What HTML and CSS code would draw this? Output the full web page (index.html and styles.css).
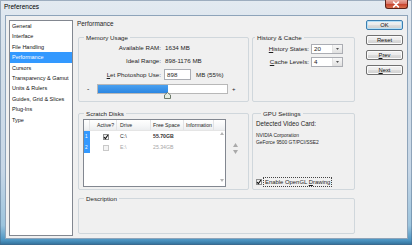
FILE: index.html
```html
<!DOCTYPE html>
<html>
<head>
<meta charset="utf-8">
<title>Preferences</title>
<link rel="stylesheet" href="styles.css">
</head>
<body>
<div class="window">
  <div class="titlebar">
    <span class="title">Preferences</span>
    <div class="close">
      <svg width="23" height="9" viewBox="0 0 23 9"><path d="M9 2 L14 7 M14 2 L9 7" stroke="#fff" stroke-width="1.6" stroke-linecap="round"/></svg>
    </div>
  </div>
  <div class="client">
    <ul class="nav">
      <li>General</li>
      <li>Interface</li>
      <li>File Handling</li>
      <li class="sel">Performance</li>
      <li>Cursors</li>
      <li>Transparency &amp; Gamut</li>
      <li>Units &amp; Rulers</li>
      <li>Guides, Grid &amp; Slices</li>
      <li>Plug-Ins</li>
      <li>Type</li>
    </ul>

    <div class="main">
      <div class="page-title">Performance</div>
      <div class="grid">
        <section class="group memory">
          <div class="legend">Memory Usage</div>
          <div class="mem-grid">
            <span class="lbl">Available RAM:</span><span class="val">1634 MB</span>
            <span class="lbl">Ideal Range:</span><span class="val">898-1176 MB</span>
            <span class="lbl"><u>L</u>et Photoshop Use:</span>
            <span class="val use"><span class="input">898</span><span>MB (55%)</span></span>
          </div>
          <div class="slider">
            <span class="minus">-</span>
            <div class="bar">
              <div class="fill" style="width:70px"></div>
              <svg class="thumb" width="7" height="7" viewBox="0 0 7 7"><path d="M0.5 3 L3.5 0.5 L6.5 3 L6.5 6.5 L0.5 6.5 Z" fill="#e4ece0" stroke="#6d7a6a" stroke-width="1"/></svg>
            </div>
            <span class="plus">+</span>
          </div>
        </section>

        <section class="group history">
          <div class="legend">History &amp; Cache</div>
          <div class="hist-grid">
            <span class="lbl"><u>H</u>istory States:</span>
            <span class="combo"><span class="combo-text">20</span><span class="combo-btn"><svg width="3" height="2" viewBox="0 0 3 2"><path d="M0 0 L3 0 L1.5 2 Z" fill="#555"/></svg></span></span>
            <span class="lbl"><u>C</u>ache Levels:</span>
            <span class="combo"><span class="combo-text">4</span><span class="combo-btn"><svg width="3" height="2" viewBox="0 0 3 2"><path d="M0 0 L3 0 L1.5 2 Z" fill="#555"/></svg></span></span>
          </div>
        </section>

        <section class="group scratch">
          <div class="legend">Scratch Disks</div>
          <div class="scratch-body">
            <div class="table">
              <div class="thead">
                <span class="c-num"></span><span class="c-act">Active?</span><span class="c-drv">Drive</span><span class="c-free">Free Space</span><span class="c-info">Information</span><span class="c-fill"></span>
              </div>
              <div class="tbody">
                <div class="rows">
                  <div class="tr">
                    <span class="c-num num">1</span>
                    <span class="c-act"><span class="chk"><svg width="6" height="6" viewBox="0 0 6 6"><path d="M1 3.1 L2.4 4.6 L5 1" fill="none" stroke="#111" stroke-width="1.1"/></svg></span></span>
                    <span class="c-drv">C:\</span>
                    <span class="c-free strong">55.70GB</span>
                    <span class="c-info"></span>
                  </div>
                  <div class="tr off">
                    <span class="c-num num">2</span>
                    <span class="c-act"><span class="chk dis"></span></span>
                    <span class="c-drv">E:\</span>
                    <span class="c-free">25.34GB</span>
                    <span class="c-info"></span>
                  </div>
                </div>
                <div class="vscroll">
                  <svg width="4" height="3" viewBox="0 0 4 3"><path d="M0 3 L4 3 L2 0 Z" fill="#b5b5b5"/></svg>
                  <svg width="4" height="3" viewBox="0 0 4 3"><path d="M0 0 L4 0 L2 3 Z" fill="#b5b5b5"/></svg>
                </div>
              </div>
            </div>
            <div class="order">
              <svg width="5" height="4" viewBox="0 0 5 4"><path d="M0 4 L5 4 L2.5 0 Z" fill="#a9a9a9"/></svg>
              <svg width="5" height="4" viewBox="0 0 5 4"><path d="M0 0 L5 0 L2.5 4 Z" fill="#a9a9a9"/></svg>
            </div>
          </div>
        </section>

        <section class="group gpu">
          <div class="legend">GPU Settings</div>
          <div class="gpu-label">Detected Video Card:</div>
          <div class="gpu-info">NVIDIA Corporation<br>GeForce 9500 GT/PCI/SSE2</div>
          <label class="gl">
            <span class="chk"><svg width="6" height="6" viewBox="0 0 6 6"><path d="M1 3.1 L2.4 4.6 L5 1" fill="none" stroke="#111" stroke-width="1.1"/></svg></span>
            <span class="gl-text">Enable OpenGL <u>D</u>rawing</span>
          </label>
        </section>

        <section class="group desc">
          <div class="legend">Description</div>
        </section>
      </div>
    </div>

    <div class="buttons">
      <button class="btn default">OK</button>
      <button class="btn">Reset</button>
      <button class="btn"><u>P</u>rev</button>
      <button class="btn"><u>N</u>ext</button>
    </div>
  </div>
</div>
</body>
</html>
```

FILE: styles.css
```css
* { box-sizing: border-box; }

html, body {
  margin: 0;
  padding: 0;
}

body {
  width: 412px;
  height: 245px;
  overflow: hidden;
  font-family: "Liberation Sans", Arial, sans-serif;
  color: #1e1e1e;
  background: #cfdbe7;
}

.window {
  width: 412px;
  height: 245px;
  display: flex;
  flex-direction: column;
  padding: 0 4px 6px 5px;
  background: linear-gradient(180deg, #e3eaf1 0%, #d5e0ea 25%, #c6d6e6 70%, #9cc4dd 92%, #4d95c2 98%, #2f6d96 100%);
  box-shadow: inset 0 0 0 1px rgba(70, 100, 130, 0.45);
}

.titlebar {
  height: 15px;
  display: flex;
  align-items: flex-start;
  flex: none;
}

.title {
  font-size: 6.5px;
  line-height: 8px;
  margin-top: 3px;
  margin-left: -1px;
  color: #000;
}

.close {
  margin-left: auto;
  width: 23px;
  height: 9px;
  border: 1px solid #5b2219;
  border-top: none;
  border-radius: 0 0 3px 3px;
  background: linear-gradient(180deg, #e8aa9f 0%, #d9786a 45%, #c8452f 55%, #d8714f 100%);
  display: flex;
}

.close svg { display: block; margin-left: -1px; }

.client {
  flex: 1;
  display: flex;
  align-items: flex-start;
  background: #f0f0f0;
  border: 1px solid #8ea4ba;
}

/* left category list */
.nav {
  list-style: none;
  margin: 4px 0 0 3px;
  padding: 0;
  width: 64px;
  height: 216px;
  background: #fff;
  border: 1px solid #828790;
  flex: none;
}

.nav li {
  height: 10.4px;
  line-height: 10.4px;
  padding-left: 2px;
  font-size: 5.5px;
  color: #111;
  white-space: nowrap;
}

.nav li.sel {
  background: #3399ff;
  color: #fff;
}

/* main panel */
.main {
  width: 278px;
  margin-left: 4px;
  padding-top: 4px;
  flex: none;
}

.page-title {
  font-size: 6.4px;
  line-height: 8px;
  height: 8px;
  color: #1e1e1e;
}

.grid {
  margin-top: 9px;
  margin-left: 1px;
  display: grid;
  grid-template-columns: 171px 103px;
  column-gap: 3px;
}

.group {
  border: 1px solid #d0d7dc;
  border-radius: 2px;
  font-size: 6.2px;
}

.legend {
  width: fit-content;
  height: 8px;
  line-height: 8px;
  margin: -4px 0 0 5px;
  padding: 0 2px;
  background: #f0f0f0;
  font-size: 6.2px;
  white-space: nowrap;
}

.memory, .history { height: 65px; }

.scratch, .gpu { height: 77px; margin-top: 11px; }

.desc {
  grid-column: 1 / -1;
  height: 36px;
  margin-top: 8px;
}

/* memory usage */
.mem-grid {
  display: grid;
  grid-template-columns: 82px auto;
  column-gap: 3px;
  grid-auto-rows: 11px;
  row-gap: 2.25px;
  margin-top: 0.5px;
  align-items: center;
  line-height: 8px;
}

.lbl {
  text-align: right;
  white-space: nowrap;
}

.val {
  padding-left: 1px;
  white-space: nowrap;
}

.val.use {
  padding-left: 0;
  display: flex;
  align-items: center;
  gap: 5px;
}

.input {
  width: 27px;
  height: 11px;
  line-height: 9px;
  border: 1px solid #abadb3;
  background: #fff;
  padding-left: 2px;
}

.slider {
  display: flex;
  align-items: center;
  height: 10px;
  margin-top: 4px;
  padding-left: 8px;
}

.minus {
  width: 10px;
  font-size: 7px;
  line-height: 8px;
}

.bar {
  position: relative;
  width: 131px;
  height: 10px;
  border: 1px solid #b8b8b8;
  background: #fff;
}

.fill {
  height: 100%;
  background: linear-gradient(180deg, #4aa0ef 0%, #2b86e2 100%);
}

.thumb {
  position: absolute;
  left: 66px;
  top: 7px;
}

.plus {
  margin-left: 4px;
  font-size: 6px;
  line-height: 8px;
}

/* history & cache */
.history .legend { margin-left: 2px; }

.hist-grid {
  display: grid;
  grid-template-columns: 56px 32px;
  column-gap: 2px;
  grid-auto-rows: 10px;
  row-gap: 3px;
  margin-top: 2px;
  align-items: center;
  line-height: 8px;
}

.combo {
  height: 10px;
  border: 1px solid #abadb3;
  background: #fff;
  display: flex;
  align-items: center;
}

.combo-text { padding-left: 2px; }

.combo-btn {
  margin-left: auto;
  width: 10px;
  height: 8px;
  margin-right: 0;
  border-left: 1px solid #e2e2e2;
  background: linear-gradient(180deg, #f7f7f7 0%, #ececec 50%, #e0e0e0 100%);
  display: flex;
  align-items: center;
  justify-content: center;
}

.combo-btn svg { display: block; }

/* scratch disks */
.scratch-body {
  display: flex;
  align-items: flex-start;
  margin-top: 1px;
  margin-left: 4px;
}

.table {
  width: 143px;
  height: 68px;
  border: 1px solid #828790;
  background: #fff;
  display: flex;
  flex-direction: column;
  font-size: 5.2px;
}

.thead {
  display: flex;
  height: 11px;
  border-bottom: 1px solid #e5e5e5;
  background: linear-gradient(180deg, #ffffff 0%, #f6f7f8 55%, #eceef0 100%);
  line-height: 10px;
}

.thead > span {
  border-right: 1px solid #e2e3e5;
  white-space: nowrap;
}

.thead > .c-fill { border-right: none; flex: 1; }

.c-num { width: 6px; flex: none; }
.c-act { width: 27px; flex: none; padding-left: 7px; }
.c-drv { width: 34px; flex: none; padding-left: 3px; }
.c-free { width: 33px; flex: none; padding-left: 2px; }
.c-info { width: 30px; flex: none; padding-left: 2px; }

.tbody {
  flex: 1;
  display: flex;
}

.rows { flex: 1; }

.tr {
  display: flex;
  height: 11px;
  line-height: 11px;
  align-items: center;
}

.tr > span { border-right: 1px solid transparent; }

.num {
  align-self: stretch;
  background: #3399ff;
  color: #fff;
  padding-left: 1px;
  font-size: 4.6px;
}

.tr .c-act { padding-left: 13px; display: flex; align-items: center; }

.chk {
  width: 6px;
  height: 6px;
  border: 1px solid #8e8f8f;
  background: linear-gradient(135deg, #e6e6e6 0%, #ffffff 100%);
  display: inline-flex;
  align-items: center;
  justify-content: center;
  flex: none;
}

.chk svg { display: block; margin: -1px; }

.chk.dis {
  border-color: #c9c9c9;
  background: #f4f4f4;
}

.strong { font-weight: bold; color: #333; }

.tr.off { color: #a6a6a6; }

.vscroll {
  width: 7px;
  display: flex;
  flex-direction: column;
  justify-content: space-between;
  align-items: center;
  padding: 1px 0 4px;
}

.vscroll svg { display: block; }

.order {
  margin-left: 7px;
  margin-top: 24px;
  display: flex;
  flex-direction: column;
  gap: 3px;
}

.order svg { display: block; }

/* gpu */
.gpu {
  display: flex;
  flex-direction: column;
}

.gpu .legend { margin-left: 8px; }

.gpu-label {
  margin: 2px 0 0 3px;
  line-height: 8px;
  font-size: 6.3px;
  white-space: nowrap;
}

.gpu-info {
  margin: 3.5px 0 0 3px;
  font-size: 4.9px;
  line-height: 7px;
  white-space: nowrap;
}

.gl {
  margin-top: auto;
  margin-bottom: 2px;
  height: 10px;
  padding-left: 3px;
  display: flex;
  align-items: center;
}

.gl-text {
  margin-left: 1px;
  padding: 0 1px;
  height: 10px;
  line-height: 9px;
  border: 1px dotted #444;
  font-size: 5.9px;
  white-space: nowrap;
}

/* buttons */
.buttons {
  width: 37px;
  margin-left: 11px;
  margin-top: 4px;
  display: flex;
  flex-direction: column;
  gap: 5px;
  flex: none;
}

.btn {
  height: 10px;
  padding: 0;
  margin: 0;
  font-family: "Liberation Sans", Arial, sans-serif;
  font-size: 5.8px;
  line-height: 8px;
  color: #111;
  border: 1px solid #707070;
  border-radius: 2px;
  background: linear-gradient(180deg, #f2f2f2 0%, #ebebeb 50%, #dddddd 51%, #cfcfcf 100%);
  box-shadow: inset 0 0 0 1px #fbfbfb;
}

.btn.default {
  border-color: #3c7fb1;
  box-shadow: inset 0 0 0 1px #b6e0f7;
}
```
